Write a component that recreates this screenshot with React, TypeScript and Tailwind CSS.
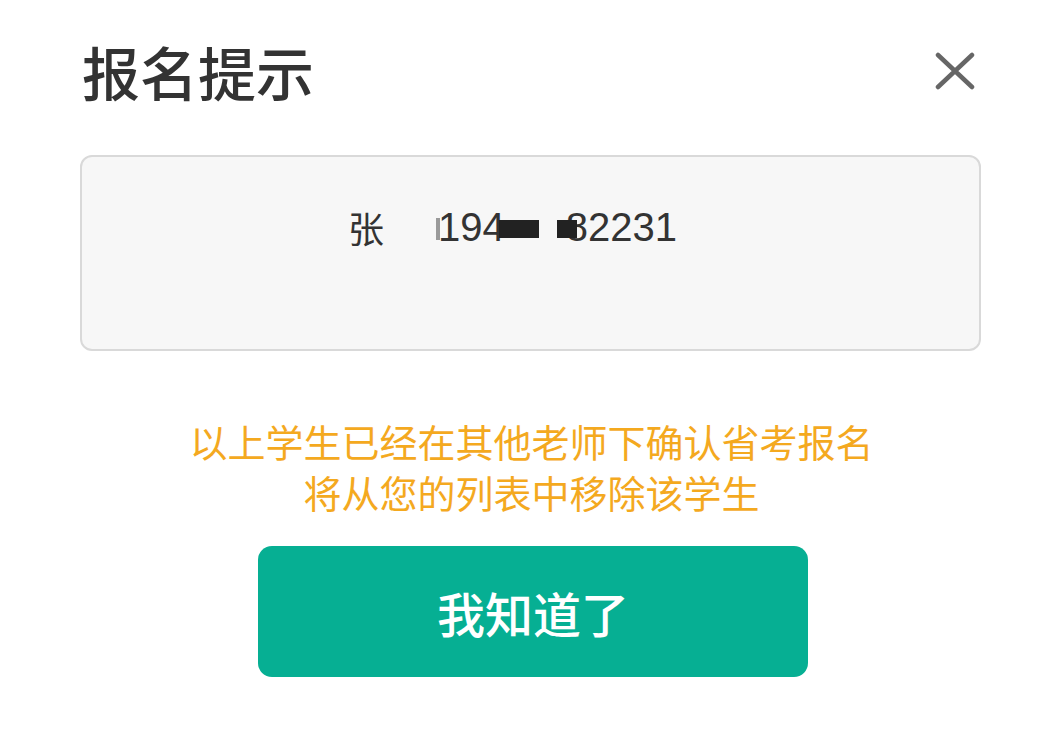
export default function App() {
  const sans = { fontFamily: '"Liberation Sans", "Noto Sans CJK SC", sans-serif' };
  const cjk = { fontFamily: '"Noto Sans CJK SC", sans-serif' };
  return (
    <div className="w-[1061px] h-[730px] bg-white px-[80px] pt-[42px]" style={sans}>
      {/* Header */}
      <div className="flex items-center justify-between h-[58px]">
        <h1 className="text-[58px] leading-none font-medium text-[#333333] pl-[2px]" style={cjk}>报名提示</h1>
        <svg width="40" height="38" viewBox="0 0 40 38" className="mr-[6px]">
          <path d="M3 3 L37 35 M37 3 L3 35" stroke="#666666" strokeWidth="4.5" strokeLinecap="round" />
        </svg>
      </div>

      {/* Student box */}
      <div className="mt-[55px] h-[196px] rounded-[12px] border-2 border-[#d9d9d9] bg-[#f7f7f7] pt-[51px] pl-[266px]">
        <div className="flex items-center h-[38px] leading-none text-[#333333]">
          <span className="text-[36px]" style={cjk}>张</span>
          <span className="w-[52px]" />
          <span className="w-[4px] h-[22px] bg-[#9a9a9a] mt-[4px] mr-[1px]" />
          <span className="text-[40px] ml-[-3px]">194</span>
          <span className="w-[40px] h-[18px] bg-[#222222] ml-[-6px] mt-[4px]" />
          <span className="w-[18px]" />
          <span className="w-[20px] h-[18px] bg-[#222222] mt-[4px] relative z-10" />
          <span className="text-[40px] ml-[-11px]">82231</span>
        </div>
      </div>

      {/* Notice */}
      <div className="mt-[64px] text-center text-[38px] leading-[51px] text-[#f4a91f] pl-[2px]" style={cjk}>
        <p>以上学生已经在其他老师下确认省考报名</p>
        <p>将从您的列表中移除该学生</p>
      </div>

      {/* Confirm */}
      <button
        className="mt-[29px] ml-[178px] w-[550px] h-[131px] rounded-[14px] bg-[#06af93] text-white text-[48px] font-medium leading-none flex items-center justify-center"
        style={cjk}
      >
        我知道了
      </button>
    </div>
  );
}
